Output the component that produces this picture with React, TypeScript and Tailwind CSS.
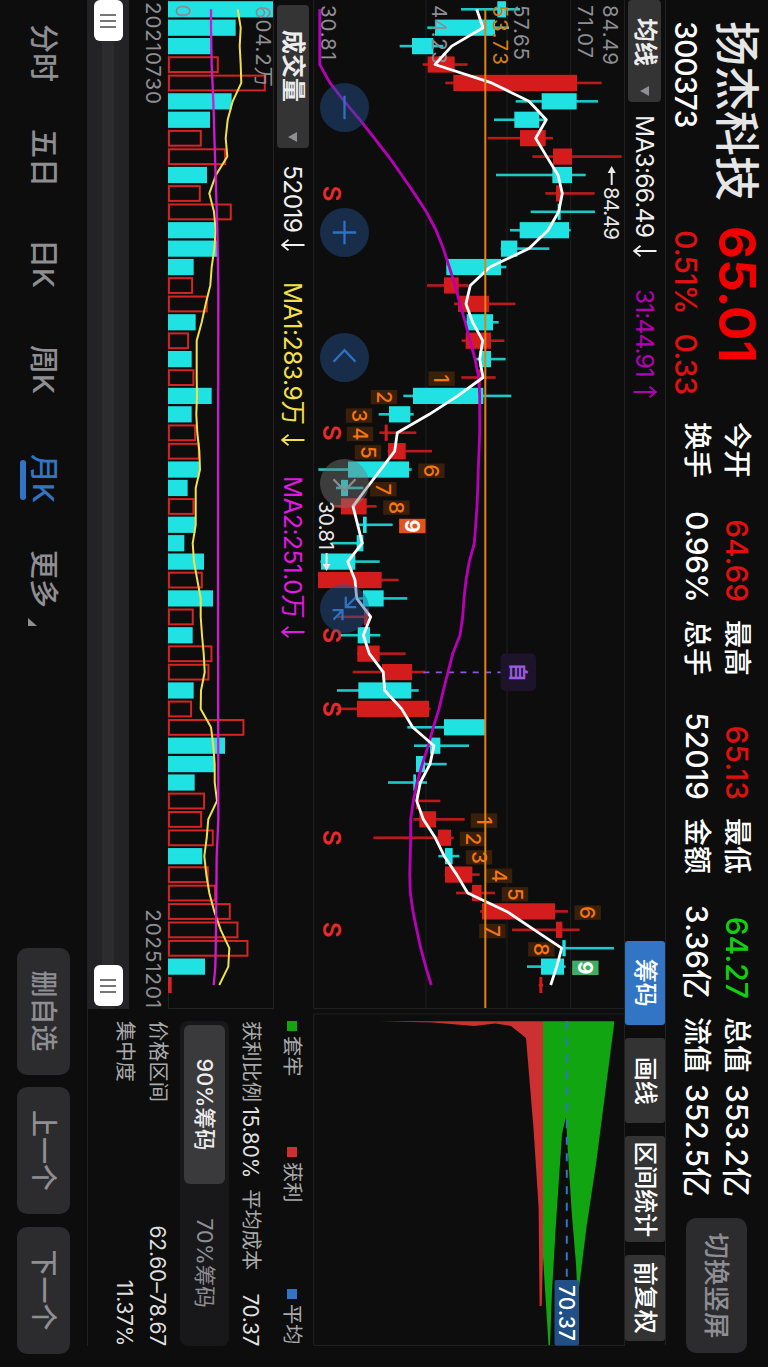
import React from "react";
import clsx from "clsx";

type Candle = [up: 0 | 1, low: number, bodyLow: number, bodyHigh: number, high: number];

const STEP = 18.41;
const cx = (i: number) => 9.3 + STEP * i;
const priceY = (v: number) => 315 - v / 3;
const volY = (v: number) => 106 - (v - 249) / 3;

const CANDLES: Candle[] = [
  [0, 453, 562, 588, 630], [0, 352, 375, 555, 597], [0, 269, 306, 370, 400], [1, 338, 353, 434, 473],
  [1, 406, 430, 801, 875], [0, 617, 695, 800, 864], [0, 552, 613, 688, 706], [1, 533, 630, 707, 729],
  [1, 667, 729, 786, 935], [0, 558, 727, 786, 827], [1, 706, 738, 755, 854], [0, 662, 743, 752, 855],
  [0, 600, 629, 777, 782], [0, 572, 573, 622, 718], [0, 409, 409, 573, 589], [1, 351, 402, 446, 475],
  [1, 432, 444, 537, 616], [0, 468, 470, 549, 566], [1, 455, 467, 543, 583], [0, 498, 508, 543, 587],
  [1, 454, 505, 512, 557], [0, 280, 309, 520, 604], [0, 206, 237, 301, 311], [1, 208, 224, 233, 319],
  [1, 233, 234, 287, 366], [0, 25, 114, 297, 305], [0, 78, 93, 114, 160], [1, 72, 93, 170, 200],
  [0, 145, 159, 170, 248], [0, 65, 140, 160, 160], [0, 31, 33, 136, 209], [1, 24, 24, 215, 266],
  [0, 145, 159, 221, 292], [1, 80, 162, 175, 175], [0, 92, 143, 180, 211], [1, 141, 142, 209, 287],
  [1, 128, 216, 306, 345], [0, 81, 145, 304, 326], [1, 80, 141, 357, 362], [0, 292, 402, 526, 526],
  [0, 312, 360, 391, 477], [0, 318, 318, 345, 410], [0, 234, 310, 318, 351], [1, 318, 318, 325, 391],
  [1, 310, 328, 378, 464], [1, 190, 384, 423, 431], [0, 385, 405, 428, 448], [1, 404, 405, 487, 509],
  [1, 438, 486, 515, 555], [1, 510, 516, 735, 774], [1, 606, 738, 757, 809], [0, 757, 757, 767, 912],
  [0, 651, 693, 762, 767], [1, 686, 688, 697, 699],
];

const MA_SHORT = [
  500, 519, 425, 375, 545, 657, 709, 677, 710, 744, 757, 746, 714, 657, 540, 481, 468, 488, 518, 509, 519, 443, 358,
  262, 254, 212, 170, 129, 143, 157, 113, 135, 140, 182, 160, 178, 220, 224, 275, 308, 372, 360, 331, 320, 340, 376,
  403, 440, 473, 590, 673, 755, 740, 722,
];
const MA_LONG = [
  29, 29, 29, 29, 60, 103, 150, 193, 236, 275, 313, 349, 378, 400, 418, 435, 450, 466, 480, 495, 506, 509, 509, 509,
  507, 505, 503, 501, 497, 493, 478, 468, 462, 458, 450, 428, 414, 400, 387, 370, 355, 337, 321, 310, 302, 302, 301,
  299, 301, 309, 320, 332, 347, 364,
];
const VOLUMES = [
  564, 452, 377, 401, 542, 440, 375, 350, 423, 366, 347, 440, 390, 396, 326, 324, 368, 332, 312, 320, 328, 380, 320,
  333, 344, 343, 308, 328, 331, 298, 357, 353, 384, 326, 323, 382, 373, 326, 321, 478, 420, 388, 329, 360, 351, 386,
  352, 371, 393, 437, 460, 490, 360, 260,
];
const VOLUME_UP = [11, 39, 51];
const VOL_MA1 = [
  458, 467, 464, 467, 469, 443, 428, 422, 427, 393, 373, 387, 392, 388, 380, 376, 362, 350, 335, 335, 335, 336, 334,
  337, 343, 345, 332, 332, 332, 323, 327, 337, 347, 347, 351, 356, 359, 348, 347, 378, 385, 389, 389, 396, 370, 365,
  358, 364, 373, 388, 407, 433, 430, 403,
];
const VOL_MA2: [number, number][] = [
  [0, 378], [1, 378], [3, 380], [5, 385], [8, 390], [12, 397], [15, 400], [30, 399], [44, 400], [46, 395], [50, 393],
  [52, 391], [53, 386],
];

const MARKS: [i: number, v: number, n: number][] = [
  [20, 395, 1], [21, 222, 2], [22, 147, 3], [23, 150, 4], [24, 174, 5], [25, 364, 6], [26, 220, 7], [27, 259, 8],
  [28, 307, 9], [44, 522, 1], [45, 489, 2], [46, 507, 3], [47, 567, 4], [48, 615, 5], [49, 833, 6], [50, 547, 7],
  [51, 694, 8], [52, 826, 9],
];
const SELLS = [10, 23, 34, 38, 45, 50];

const CYAN = "#20e2e2";
const RED = "#d41c1c";
const path = (vals: number[], y: (v: number) => number) =>
  vals.map((v, i) => `${cx(i).toFixed(1)},${y(v).toFixed(1)}`).join(" ");

function AxisText({ x, y, w, fill = "#8e8e93", children }: { x: number; y: number; w: number; fill?: string; children: string }) {
  return (
    <text x={x} y={y + 7.5} textLength={w} fontSize="20.5" fill={fill}>
      {children}
    </text>
  );
}

function PriceChart() {
  return (
    <svg width="1009" height="312" viewBox="0 0 1009 312" className="block overflow-visible">
      <g stroke="#202021" strokeWidth="1">
        {[348, 591, 782].map((v) => (
          <line key={v} x1="0" x2="1008" y1={priceY(v)} y2={priceY(v)} />
        ))}
        <path d="M0 .5H1008.5V311.3H0" fill="none" />
      </g>
      {CANDLES.map(([up, low, a, b, high], i) => {
        const c = up ? RED : CYAN;
        return (
          <g key={i} fill={c}>
            <rect x={cx(i) - 1.3} y={priceY(high)} width="2.6" height={(high - low) / 3} opacity=".88" />
            <rect x={cx(i) - 8.1} y={priceY(b)} width="16.2" height={(b - a) / 3} />
          </g>
        );
      })}
      <AxisText x={5} y={15} w={60}>84.49</AxisText>
      <AxisText x={5} y={39.7} w={53}>71.07</AxisText>
      <AxisText x={5} y={103.7} w={55}>57.65</AxisText>
      <AxisText x={5} y={124.7} w={60} fill="#d97c12">53.73</AxisText>
      <AxisText x={5} y={185.7} w={59}>44.23</AxisText>
      <AxisText x={5} y={296.7} w={55}>30.81</AxisText>
      {MARKS.map(([i, v, n]) => (
        <g key={i}>
          <rect
            x={cx(i) - 6} y={priceY(v) - 13.2} width="14.4" height="26.4"
            fill={n !== 9 ? "#3a200b" : i < 40 ? "#e4521f" : "#3eae63"}
          />
          <text
            x={cx(i) + 1.3} y={priceY(v) + 7.3} textAnchor="middle" fontSize="20.5"
            fontWeight={n === 9 ? 700 : 500} fill={n === 9 ? "#fff" : "#f5760f"}
          >
            {n}
          </text>
        </g>
      ))}
      {SELLS.map((i) => (
        <text key={i} x={cx(i)} y="302" textAnchor="middle" fontSize="24.5" fontWeight="600" fill="#ea2a2a">S</text>
      ))}
      <g stroke="#e8e8e8" strokeWidth="2" fill="none">
        <path d="M168 13.3H185" />
        <path d="M553 298.4H568" />
      </g>
      <path d="M166 13.3l7-4v8zM571 298.4l-7-4v8z" fill="#e8e8e8" />
      <AxisText x={187} y={13.3} w={53} fill="#e8e8e8">84.49</AxisText>
      <AxisText x={501} y={298.4} w={49} fill="#e8e8e8">30.81</AxisText>
      <line x1="672.3" x2="672.3" y1="201.5" y2="124" stroke="#9254dc" strokeWidth="1.8" strokeDasharray="6 6.3" />
      <rect x="653.5" y="89" width="37.5" height="35.5" rx="5" fill="#1d132a" />
      <text x="672.3" y="114" textAnchor="middle" fontSize="19" fontWeight="700" fill="#9a5be2">自</text>
      <polyline points={path(MA_LONG, priceY)} fill="none" stroke="#b800b8" strokeWidth="2.8" />
      <polyline points={path(MA_SHORT, priceY)} fill="none" stroke="#fff" strokeWidth="2.8" strokeLinejoin="round" />
      <line x1="9.3" x2="1008" y1="139.7" y2="139.7" stroke="#e08316" strokeWidth="2" />
    </svg>
  );
}

function VolumeChart() {
  return (
    <svg width="1009" height="106" viewBox="0 0 1009 106" className="block overflow-visible">
      <path d="M0 .6H1008.5V105.6H0" fill="none" stroke="#242425" />
      {VOLUMES.map((v, i) => {
        const up = CANDLES[i][0] || VOLUME_UP.includes(i);
        const last = i === VOLUMES.length - 1;
        return up && !last ? (
          <rect key={i} x={cx(i) - 7.3} y={volY(v) + 0.9} width="14.8" height={(v - 249) / 3 - 1.8} fill="none" stroke="#d42424" strokeWidth="2" />
        ) : (
          <rect key={i} x={cx(i) - 8.1} y={volY(v)} width="16.2" height={(v - 249) / 3} fill={up ? "#d42424" : CYAN} />
        );
      })}
      <AxisText x={6} y={10.5} w={81}>604.2万</AxisText>
      <AxisText x={4.5} y={91} w={12}>0</AxisText>
      <polyline points={path(VOL_MA1, volY)} fill="none" stroke="#f2e04a" strokeWidth="2" />
      <polyline
        points={VOL_MA2.map(([i, v]) => `${cx(i)},${volY(v)}`).join(" ")}
        fill="none" stroke="#d018d0" strokeWidth="2.3"
      />
    </svg>
  );
}

function ChipChart() {
  return (
    <svg width="337" height="312" viewBox="0 0 337 312" className="block">
      <path d="M0 .5H336.5V311.3H5V0" fill="none" stroke="#202021" />
      <polygon
        fill="#cd3030"
        points="12.3,245 13.5,192 17,151 14.4,130 17,114 29,99 118,91.6 198,86.4 297,85.4 297,83.3 248,82 12.3,82"
      />
      <polygon
        fill="#12a512"
        points="12.3,82 12.3,11 16,11 155,29 218,38.5 282,46.4 285,47.5 255,49 202,53.4 145,57 108,59 125,63 214,69 282,73 336,75 336,76.5 248,82"
      />
      <line x1="12.3" x2="270" y1="58.2" y2="58.2" stroke="#3275c4" strokeWidth="2" strokeDasharray="8 8.5" />
      <rect x="271" y="46" width="65.5" height="24.5" rx="2" fill="#22568f" opacity=".92" />
      <text x="276" y="66" textLength="56" fontSize="21" fontWeight="500" fill="#fff">70.37</text>
    </svg>
  );
}

const ROUND_ICONS = [
  "M-11.7 0H11.7",
  "M-11.7 0H11.7M0-11.7V11.7",
  "M4.3-11L-7.3 0L4.3 11",
  "M-4.3-11L7.3 0L-4.3 11",
  "M-11.7-1.3H-1.3V-11.7M-1.3-1.3L-11-11M11.7 2H1.7V12M1.7 2L11 11",
];

function ChartButtons() {
  return (
    <div className="absolute left-[83px] top-[256px] flex gap-[76.2px]">
      {ROUND_ICONS.map((d, i) => (
        <button key={d} className={clsx("size-[49px] shrink-0 rounded-full", i === 3 ? "bg-[#77777a]/45" : "bg-[#235493]/45")}>
          <svg viewBox="-24.5 -24.5 49 49" className="block size-full" fill="none" stroke={i === 3 ? "#8b8b8d" : "#2f71c2"} strokeWidth="2.3">
            <path d={d} />
          </svg>
        </button>
      ))}
    </div>
  );
}

const Down = ({ className }: { className?: string }) => (
  <svg viewBox="0 0 10 9" className={clsx("h-[9px] w-[10px] shrink-0 fill-[#8e8e93]", className)}>
    <path d="M0 0H10L5 9Z" />
  </svg>
);

const Arrow = ({ up }: { up?: boolean }) => (
  <svg
    viewBox="0 0 12 24"
    className={clsx("h-[24px] w-[12px] shrink-0", up && "rotate-180")}
    fill="none" stroke="currentColor" strokeWidth="1.8"
  >
    <path d="M6 .5V22.5M.8 16.5L6 23L11.2 16.5" />
  </svg>
);

function Quote({ label, value, className }: { label: string; value: string; className?: string }) {
  return (
    <div className="flex h-[40px] items-center justify-between">
      <span className="text-[28px] font-medium text-white">{label}</span>
      <span className={clsx("text-[30px] font-medium", className)}>{value}</span>
    </div>
  );
}

function Header() {
  return (
    <header className="flex h-[102px] shrink-0 whitespace-nowrap leading-none text-white">
      <div className="ml-[21px] w-[209px] shrink-0">
        <div className="flex h-[62px] items-center text-[45px] font-medium text-[#e6e6e6]">扬杰科技</div>
        <div className="mt-px flex h-[38px] items-center text-[30px] font-medium tracking-[-0.9px]">300373</div>
      </div>
      <div className="w-[192px] shrink-0">
        <div className="-ml-[4px] flex h-[62px] items-center text-[51px] font-bold leading-[62px] text-[#f20000]">65.01</div>
        <div className="mt-px flex h-[38px] items-center gap-[20px] text-[30px] font-medium tracking-[-0.9px] text-[#e01010]">
          <span>0.51%</span>
          <span>0.33</span>
        </div>
      </div>
      <div className="flex shrink-0 gap-[18px] pt-[11px]">
        <div className="w-[180px]">
          <Quote label="今开" value="64.69" className="tracking-[-0.2px] text-[#e01010]" />
          <Quote label="换手" value="0.96%" className="tracking-[-0.8px]" />
        </div>
        <div className="w-[180px]">
          <Quote label="最高" value="65.13" className="text-[#e01010]" />
          <Quote label="总手" value="52019" />
        </div>
        <div className="w-[181px]">
          <Quote label="最低" value="64.27" className="text-[#10d010]" />
          <Quote label="金额" value="3.36亿" />
        </div>
        <div className="w-[180px]">
          <Quote label="总值" value="353.2亿" />
          <Quote label="流值" value="352.5亿" />
        </div>
      </div>
      <button className="ml-[21px] mt-[21px] h-[61px] w-[135px] rounded-[10px] bg-[#2c2c2e] text-[26.5px] font-medium text-[#8e8e93]">切换竖屏</button>
    </header>
  );
}

const TOOLS: [string, string][] = [
  ["筹码", "w-[84.5px] bg-[#3275c4]"],
  ["画线", "w-[85.5px] bg-[#333334]"],
  ["区间统计", "w-[106px] bg-[#333334]"],
  ["前复权", "w-[85.5px] bg-[#333334]"],
];

function IndicatorBar() {
  return (
    <div className="flex h-[41px] w-[1345px] shrink-0 items-center border-t border-[#222223] leading-none">
      <button className="flex h-[33px] w-[102px] items-center rounded-[4px] bg-[#343435] pl-[18px] text-[24px] font-bold text-[#ededed]">
        均线
        <Down className="ml-[20px]" />
      </button>
      <div className="ml-[13px] flex w-[174px] items-center gap-[8px] text-[24.5px] text-[#f0f0f0]">
        <span className="tracking-[-0.75px]">MA3:66.49</span>
        <Arrow />
      </div>
      <div className="flex items-center gap-[9px] text-[24.5px] text-[#b400b4]">
        <span className="tracking-[-0.9px]">31:44.91</span>
        <Arrow up />
      </div>
      <div className="ml-auto mr-[4.5px] flex gap-[12.8px]">
        {TOOLS.map(([t, cls]) => (
          <button key={t} className={clsx("h-[40px] rounded-[3px] text-[24px] font-medium text-white", cls)}>{t}</button>
        ))}
      </div>
    </div>
  );
}

function VolumeBar() {
  return (
    <div className="flex h-[39px] items-center pt-px leading-none">
      <button className="ml-[5px] flex h-[32px] w-[143px] items-center rounded-[4px] bg-[#343435] pl-[25px] text-[24px] font-bold text-[#ededed]">
        成交量
        <Down className="ml-[30px]" />
      </button>
      <div className="ml-[17px] flex w-[117px] items-center gap-[7px] text-[24.5px] text-[#f0f0f0]">
        <span className="tracking-[-0.6px]">52019</span>
        <Arrow />
      </div>
      <div className="flex w-[194px] items-center gap-[9px] text-[24.5px] text-[#f2e04a]">
        <span className="tracking-[-0.4px]">MA1:283.9万</span>
        <Arrow />
      </div>
      <div className="flex items-center gap-[8px] text-[24.5px] text-[#e01ae0]">
        <span className="tracking-[-0.5px]">MA2:251.0万</span>
        <Arrow />
      </div>
    </div>
  );
}

const Handle = () => (
  <div className="flex h-[29px] w-[41px] items-center justify-center gap-[4px] rounded-[6px] bg-white">
    <i className="h-[16px] w-[2px] bg-[#777]" />
    <i className="h-[16px] w-[2px] bg-[#777]" />
    <i className="h-[16px] w-[2px] bg-[#777]" />
  </div>
);

function RangeSlider() {
  return (
    <div className="flex h-[41px] flex-col justify-center bg-[#232325]">
      <div className="flex h-[12px] items-center justify-between bg-[#2c2c2e] pr-[3px]">
        <Handle />
        <Handle />
      </div>
    </div>
  );
}

function Legend({ color, children }: { color: string; children: string }) {
  return (
    <span className="flex items-center gap-[5px]">
      <i className={clsx("size-[10px]", color)} />
      {children}
    </span>
  );
}

function ChipPanel() {
  return (
    <div className="ml-[12px] w-[325px] whitespace-nowrap text-[20.3px] leading-none text-[#a9a9ab]">
      <div className="flex h-[42px] items-center">
        <div className="w-[126px]"><Legend color="bg-[#12a512]">套牢</Legend></div>
        <div className="w-[142px]"><Legend color="bg-[#cd3030]">获利</Legend></div>
        <Legend color="bg-[#3275c4]">平均</Legend>
      </div>
      <div className="flex h-[40px] items-center">
        获利比例
        <span className="ml-[4px] w-[83px] text-[21px] tracking-[-0.2px] text-[#dedede]">15.80%</span>
        平均成本
        <span className="ml-auto text-[21px] tracking-[-0.4px] text-[#dedede]">70.37</span>
      </div>
      <div className="mt-[2px] flex h-[49px] items-center rounded-[8px] bg-[#18181a] p-[4px] text-[21.5px]">
        <button className="h-[41px] w-[159px] rounded-[6px] bg-[#3a3a3c] font-medium text-[#ededed]">90%筹码</button>
        <button className="h-[41px] flex-1 text-[#8e8e93]">70%筹码</button>
      </div>
      <div className="mt-[6px] flex h-[33px] items-center justify-between">
        价格区间<span className="text-[21px] tracking-[-0.2px] text-[#dedede]">62.60–78.67</span>
      </div>
      <div className="flex h-[33px] items-center justify-between">
        集中度<span className="text-[21px] tracking-[-0.3px] text-[#dedede]">11.37%</span>
      </div>
    </div>
  );
}

const TABS: [string, string][] = [
  ["分时", "w-[105px]"],
  ["五日", "w-[110px]"],
  ["日K", "w-[106px]"],
  ["周K", "w-[109px]"],
  ["月K", "w-[96px]"],
  ["更多", "w-[68px]"],
];

function Footer() {
  return (
    <footer className="flex h-[87px] w-[1367px] items-center text-[29px] font-medium leading-none text-[#8e8e93]">
      <nav className="flex pl-[24px]">
        {TABS.map(([t, w]) => (
          <div key={t} className={clsx("relative shrink-0", w, t === "月K" && "text-[#3275c4]")}>
            {t}
            {t === "月K" && <i className="absolute -bottom-[8px] left-[6px] h-[6px] w-[40px] rounded-full bg-[#3275c4]" />}
          </div>
        ))}
        <svg viewBox="0 0 8 9" className="mt-[21px] h-[9px] w-[8px] fill-[#8e8e93]">
          <path d="M8 0V9H0Z" />
        </svg>
      </nav>
      <div className="ml-auto mr-[13.5px] flex gap-[12.5px] text-[27px]">
        {["删自选", "上一个", "下一个"].map((t) => (
          <button key={t} className="h-[53px] w-[127px] rounded-[10px] bg-[#2c2c2e]">{t}</button>
        ))}
      </div>
    </footer>
  );
}

export default function App() {
  return (
    <div className="h-[1367px] w-[768px] overflow-hidden bg-[#0d0d0d]">
      <div className="flex h-[768px] w-[1367px] origin-top-left translate-x-[768px] rotate-90 flex-col bg-[#0d0d0d] font-['Inter','Noto_Sans_CJK_SC',sans-serif]">
        <Header />
        <IndicatorBar />
        <div className="flex h-[312px] shrink-0">
          <div className="relative w-[1009px]">
            <PriceChart />
            <ChartButtons />
          </div>
          <ChipChart />
        </div>
        <div className="flex h-[226px] w-[1346px] shrink-0 border-b border-[#222223]">
          <div className="w-[1009px] shrink-0">
            <VolumeBar />
            <VolumeChart />
            <div className="flex h-[39px] items-start justify-between pl-[2px] pt-[5px] text-[20.5px] leading-none tracking-[0.9px] text-[#8e8e93]">
              <span>20210730</span>
              <span>20251201</span>
            </div>
            <RangeSlider />
          </div>
          <ChipPanel />
        </div>
        <Footer />
      </div>
    </div>
  );
}
